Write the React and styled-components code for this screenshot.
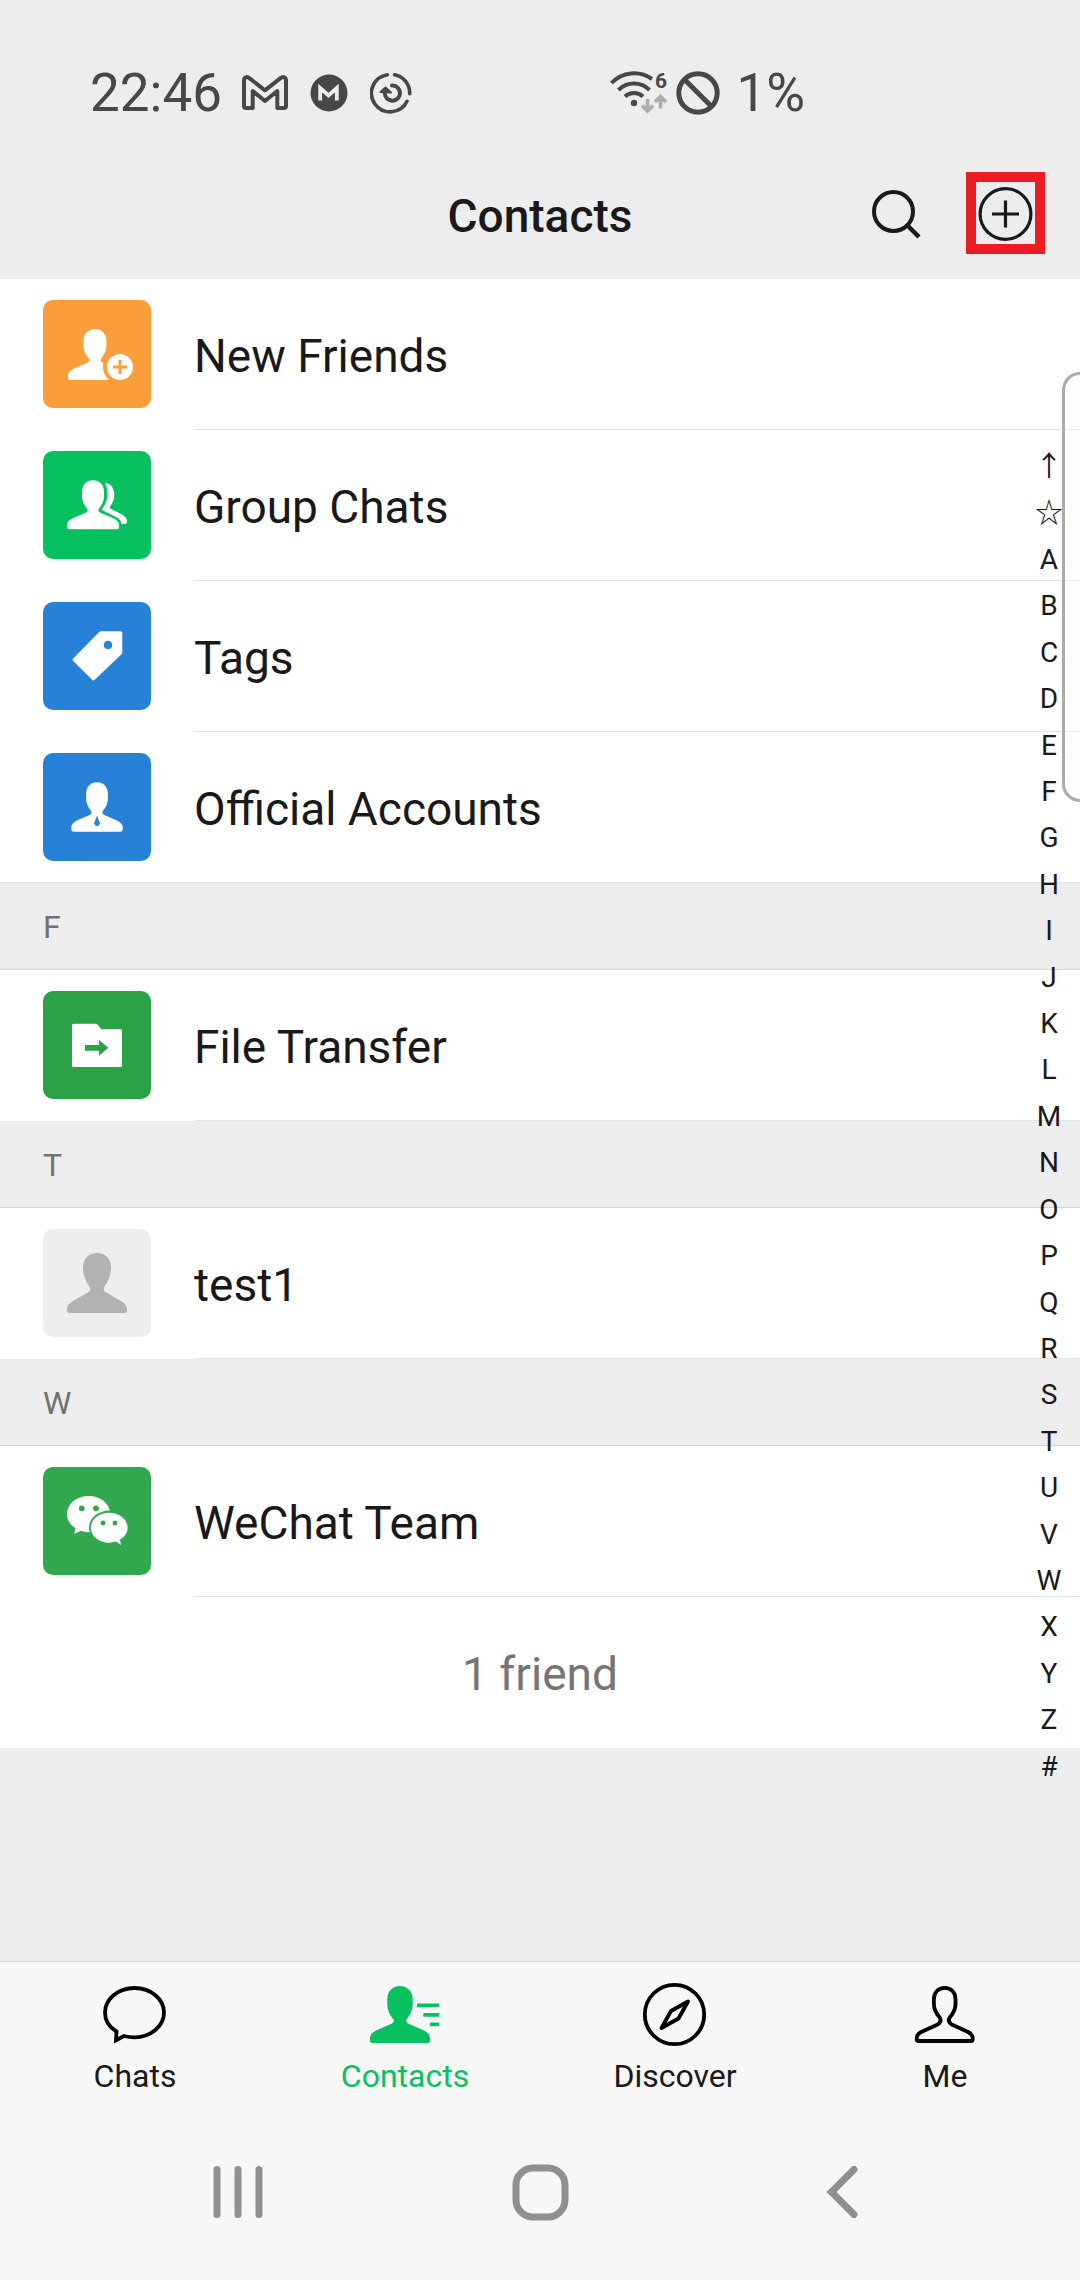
import React from 'react';
import styled, { createGlobalStyle } from 'styled-components';

const GlobalStyle = createGlobalStyle`
  *, *::before, *::after { box-sizing: border-box; }
  body {
    margin: 0;
    background: #ededed;
    color: #191919;
    font-family: Roboto, "Noto Sans", "Noto Sans CJK SC", sans-serif;
  }
  button {
    padding: 0;
    border: 0;
    background: none;
    color: inherit;
    font: inherit;
    cursor: pointer;
  }
  a { color: inherit; text-decoration: none; }
  ul { margin: 0; padding: 0; list-style: none; }
  svg { display: block; flex: none; }
`;

const Screen = styled.div`
  display: flex;
  flex-direction: column;
  min-height: 100vh;
`;

const StatusBar = styled.div`
  display: flex;
  align-items: center;
  justify-content: space-between;
  height: 151px;
  padding: 34px 275px 0 90px;
  color: #474747;
  font-size: 53px;
`;

const StatusGroup = styled.div`
  display: flex;
  align-items: center;
  gap: ${(p) => p.$gap}px;
`;

const TitleBar = styled.header`
  display: grid;
  grid-template-columns: 1fr auto 1fr;
  align-items: center;
  height: 128px;
  padding: 0 35px 4px;
`;

const Title = styled.h1`
  grid-column: 2;
  margin: 0;
  padding-top: 6px;
  font-size: 46px;
  font-weight: 500;
`;

const Actions = styled.div`
  display: flex;
  align-items: center;
  justify-content: flex-end;
  gap: 42px;
`;

const AddButton = styled.button`
  display: grid;
  place-items: center;
  width: 79px;
  height: 82px;
  border: 10px solid #ec1c24;
`;

const Main = styled.main`
  position: relative;
  flex: 1;
`;

const List = styled.ul`
  background: #fff;
`;

const Row = styled.a`
  display: flex;
  align-items: stretch;
  padding-left: 43px;
  border-bottom: ${(p) => (p.$fullLine ? '1px solid #e3e3e3' : '0')};
`;

const Avatar = styled.span`
  display: block;
  flex: none;
  width: 108px;
  height: 108px;
  margin: 21px 43px ${(p) => (p.$fullLine ? 21 : 22)}px 0;
  border-radius: 10px;
  background: ${(p) => p.$color};
  color: #fff;
`;

const Name = styled.span`
  display: flex;
  flex: 1;
  align-items: center;
  padding-top: 4px;
  font-size: 46px;
  border-bottom: ${(p) => (p.$fullLine ? '0' : '1px solid #e3e3e3')};
`;

const SectionTitle = styled.h2`
  display: flex;
  align-items: center;
  height: 87px;
  margin: 0;
  padding: 2px 0 0 43px;
  border-bottom: 1px solid #d5d5d5;
  background: #ededed;
  color: #717171;
  font-size: 32px;
  font-weight: 400;
`;

const Count = styled.p`
  display: flex;
  align-items: center;
  justify-content: center;
  height: 151px;
  margin: 0;
  padding-top: 2px;
  background: #fff;
  color: #757575;
  font-size: 46px;
`;

const IndexStrip = styled.nav`
  position: absolute;
  top: 165px;
  right: 0;
  display: flex;
  flex-direction: column;
  width: 62px;
  height: 1346px;
`;

const IndexLink = styled.a`
  display: flex;
  flex: 1;
  align-items: center;
  justify-content: center;
  font-size: 28px;
  line-height: 32px;
`;

const EdgeHandle = styled.div`
  position: absolute;
  top: 93px;
  right: 0;
  width: 18px;
  height: 430px;
  border: 3px solid #ababab;
  border-right: 0;
  border-radius: 18px 0 0 18px;
  background: rgba(252, 252, 252, 0.4);
`;

const Footer = styled.footer`
  border-top: 1px solid #d2d2d2;
  background: #f7f7f7;
`;

const Tabs = styled.nav`
  display: grid;
  grid-template-columns: repeat(4, 1fr);
  height: 142px;
  padding-top: 17px;
`;

const Tab = styled.a`
  display: flex;
  flex-direction: column;
  align-items: center;
  gap: 6px;
  color: ${(p) => (p.$active ? '#07c160' : '#191919')};
  font-size: 32px;
  line-height: 38px;
`;

const SystemNav = styled.div`
  display: grid;
  grid-template-columns: repeat(3, 1fr);
  height: 176px;
  padding: 0 87px;
  color: #909090;
`;

const SystemButton = styled.button`
  display: grid;
  place-items: center;
`;

const PERSON =
  'M30 0C22.5 0 17.3 5.5 17.3 13V18C17.3 26 21 30 23.5 33.5Q24.5 36 22 37.5L6 44.5Q0 47.5 0 52V54.5Q0 57 2.5 57H57.5Q60 57 60 54.5V52Q60 47.5 54 44.5L38 37.5Q35.5 36 36.5 33.5C39 30 42.7 26 42.7 18V13C42.7 5.5 37.5 0 30 0Z';

function AvatarArt({ children }) {
  return (
    <svg width="108" height="108" viewBox="0 0 108 108" fill="currentColor" aria-hidden="true">
      {children}
    </svg>
  );
}

const art = {
  newFriends: (
    <AvatarArt>
      <path d={PERSON} transform="translate(25 29) scale(.9 .895)" />
      <circle cx="77" cy="67" r="17" fill="#fa9d3b" />
      <path d="M66 80H88V90H66Z" fill="#fa9d3b" />
      <circle cx="77" cy="67" r="13" />
      <path d="M70 67H84M77 60V74" stroke="#fa9d3b" strokeWidth="2.8" />
    </AvatarArt>
  ),
  groups: (
    <AvatarArt>
      <path d={PERSON} transform="translate(24 29.3) scale(.867 .86)" />
      <path d="M62 32.3C68 32 71.3 38 71.3 43C71.3 49 69.5 52 67 55.5Q66.5 57 68 58L79 63.5Q84 66 84 70.5Q84 73 81.5 73H78.3Q78.3 69 74 66.5L58.5 58.8C62 54 64.5 50 64.5 43C64.5 38 63.5 35 62 32.3Z" />
    </AvatarArt>
  ),
  tags: (
    <AvatarArt>
      <path
        d="M57.5 30.8H77.8V51L50.4 77L31 57.7Z"
        stroke="currentColor"
        strokeWidth="3"
        strokeLinejoin="round"
      />
      <circle cx="65" cy="43" r="4.3" fill="#2782d7" />
    </AvatarArt>
  ),
  official: (
    <AvatarArt>
      <path d={PERSON} transform="translate(28.3 29.3) scale(.857 .866)" />
      <path d="M54 62.5L57 70.5Q56 73 54 73Q52 73 51 70.5Z" fill="#2782d7" />
    </AvatarArt>
  ),
  file: (
    <AvatarArt>
      <path d="M30.5 32.7H53Q54 32.7 54.6 33.5L58.3 38.3H77.5Q79 38.3 79 40V74.5Q79 76 77.5 76H30.5Q29 76 29 74.5V34.2Q29 32.7 30.5 32.7Z" />
      <path d="M42 54H56V49L65.3 56.8L56 64.7V59.7H42Z" fill="#2ba245" />
    </AvatarArt>
  ),
  blank: (
    <AvatarArt>
      <path
        fill="#b2b2b2"
        d="M54 24C45.5 24 40 30 40 38C40 48 44 54 47 58.5Q48 61.5 45.5 63L31 71.5Q24 75.5 24 80V81.5Q24 84 26.5 84H81.5Q84 84 84 81.5V80Q84 75.5 77 71.5L62.5 63Q60 61.5 61 58.5C64 54 68 48 68 38C68 30 62.5 24 54 24Z"
      />
    </AvatarArt>
  ),
  wechat: (
    <AvatarArt>
      <path d="M45.7 29C33.7 29 24 37 24 47.3C24 53 27 57.8 32.6 61.2L31.2 67L38 63.8Q42 65.3 47 65.3C58 65 67.4 57 67.4 47.3C67.4 37 57.7 29 45.7 29Z" />
      <ellipse cx="66.2" cy="60.6" rx="20.2" ry="17" fill="#32a84e" />
      <path d="M66.2 45.7C56 45.7 47.8 52.3 47.8 60.7C47.8 69 56 75.7 66.2 75.7Q69.5 75.7 73 74.6L78 78L77 72.6C82 69.5 84.6 65.5 84.6 60.7C84.6 52.3 76.3 45.7 66.2 45.7Z" />
      <g fill="#32a84e">
        <circle cx="38.8" cy="41.3" r="2.9" />
        <circle cx="53" cy="41.3" r="2.9" />
        <circle cx="60" cy="56" r="2.4" />
        <circle cx="72" cy="56" r="2.4" />
      </g>
    </AvatarArt>
  ),
};

const shortcuts = [
  { name: 'New Friends', color: '#fa9d3b', icon: art.newFriends },
  { name: 'Group Chats', color: '#07c160', icon: art.groups },
  { name: 'Tags', color: '#2782d7', icon: art.tags },
  { name: 'Official Accounts', color: '#2782d7', icon: art.official, fullLine: true },
];

const sections = [
  { letter: 'F', contacts: [{ name: 'File Transfer', color: '#2ba245', icon: art.file }] },
  { letter: 'T', contacts: [{ name: 'test1', color: '#eeeeee', icon: art.blank }] },
  { letter: 'W', contacts: [{ name: 'WeChat Team', color: '#32a84e', icon: art.wechat }] },
];

const indexKeys = ['↑', '☆', ...'ABCDEFGHIJKLMNOPQRSTUVWXYZ', '#'];

function TabArt({ children }) {
  return (
    <svg width="72" height="72" viewBox="0 0 72 72" fill="none" strokeWidth="3.8" strokeLinejoin="round" aria-hidden="true">
      {children}
    </svg>
  );
}

const tabs = [
  {
    name: 'Chats',
    icon: (
      <TabArt>
        <path
          stroke="#000"
          strokeLinejoin="miter"
          d="M17.5 52.5C10 48 6 41 6 33.5C6 20 19 9 35.5 9S65 20 65 33.5S52 58.3 35.5 58.3Q29.5 58.3 25 57L17 61.2Z"
        />
      </TabArt>
    ),
  },
  {
    name: 'Contacts',
    active: true,
    icon: (
      <TabArt>
        <path d={PERSON} transform="translate(1 7)" fill="#07c160" />
        <path d="M48 26.3H70.3M54.3 35.8H70.3M61 45.3H70.3" stroke="#07c160" />
      </TabArt>
    ),
  },
  {
    name: 'Discover',
    icon: (
      <TabArt>
        <g stroke="#000">
          <circle cx="35.5" cy="35.5" r="29.7" />
          <path d="M49 22.5L39.5 39.5L22.5 49L32 32Z" />
        </g>
      </TabArt>
    ),
  },
  {
    name: 'Me',
    icon: (
      <TabArt>
        <path
          transform="translate(5.7 7)"
          stroke="#000"
          d="M30 1.9C23.5 1.9 19.2 6.5 19.2 13V18C19.2 25 22.5 28.5 25 31.5Q27.5 35.5 23 38.5L6.5 46Q2 48.5 2 52V53Q2 55 4 55H56Q58 55 58 53V52Q58 48.5 53.5 46L37 38.5Q32.5 35.5 35 31.5C37.5 28.5 40.8 25 40.8 18V13C40.8 6.5 36.5 1.9 30 1.9Z"
        />
      </TabArt>
    ),
  },
];

function ContactRow({ name, color, icon, fullLine }) {
  return (
    <li>
      <Row href="#contact" $fullLine={fullLine}>
        <Avatar $color={color} $fullLine={fullLine}>{icon}</Avatar>
        <Name $fullLine={fullLine}>{name}</Name>
      </Row>
    </li>
  );
}

function Status() {
  return (
    <StatusBar>
      <StatusGroup $gap={20}>
        <span>22:46</span>
        <StatusGroup $gap={22}>
          <svg width="46" height="36" viewBox="0 0 46 36" fill="none" stroke="currentColor" strokeWidth="4" strokeLinejoin="round">
            <path d="M2 5.5C2 2 5 1.2 7.5 3.2L23 15.3L38.5 3.2C41 1.2 44 2 44 5.5V31Q44 33 42 33H35.3V16L23 26L10.7 16V33H4Q2 33 2 31Z" />
          </svg>
          <svg width="38" height="38" viewBox="0 0 38 38" fill="none">
            <circle cx="19" cy="19" r="18.5" fill="currentColor" />
            <path d="M10.2 26.5V14L18.5 21.5L26.8 14V26.5" stroke="#ededed" strokeWidth="3.8" />
          </svg>
          <svg width="42" height="42" viewBox="0 0 42 42" fill="none" stroke="currentColor" strokeWidth="3.6" strokeLinecap="round">
            <path d="M24.6 2.7A18.7 18.7 0 0 1 39.7 21.7M37 29.3A18.7 18.7 0 1 1 17.4 2.7" />
            <path d="M22 13.5A7.6 7.6 0 1 1 14.8 21.5" strokeWidth="4" />
            <path d="M10.5 20L15.5 15.5L21 20.5Z" fill="currentColor" strokeWidth="2" strokeLinejoin="round" />
          </svg>
        </StatusGroup>
      </StatusGroup>
      <StatusGroup $gap={16}>
        <StatusGroup $gap={8}>
          <svg width="58" height="56" viewBox="0 -6 58 56" fill="none" stroke="currentColor" strokeWidth="4">
            <path d="M1.5 12A31 31 0 0 1 42 8M8.5 19A22 22 0 0 1 39.5 19M15 25.5A13 13 0 0 1 33 25.5" />
            <circle cx="24" cy="32" r="3.2" fill="currentColor" stroke="none" />
            <g stroke="#ababab" strokeWidth="3.6">
              <path d="M37.5 28V40M32 34.5L37.5 40L43 34.5M50.5 37.5V25.5M45 31L50.5 25.5L56 31" />
            </g>
            <text x="45" y="17" fill="currentColor" stroke="none" fontSize="21" fontWeight="700">6</text>
          </svg>
          <svg width="44" height="44" viewBox="0 0 44 44" fill="none" stroke="currentColor" strokeWidth="5">
            <circle cx="22" cy="22" r="19.2" />
            <path d="M8.5 8.5L35.5 35.5" />
          </svg>
        </StatusGroup>
        <span>1%</span>
      </StatusGroup>
    </StatusBar>
  );
}

export default function App() {
  return (
    <Screen>
      <GlobalStyle />
      <Status />
      <TitleBar>
        <Title>Contacts</Title>
        <Actions>
          <button aria-label="Search">
            <svg width="58" height="58" viewBox="0 0 58 58" fill="none" stroke="#191919" strokeWidth="4">
              <circle cx="27.5" cy="27.5" r="19.5" />
              <path d="M41.5 41.5L53 53" strokeWidth="4.4" />
            </svg>
          </button>
          <AddButton aria-label="Add contact">
            <svg width="56" height="56" viewBox="0 0 56 56" fill="none" stroke="#191919" strokeWidth="3.2">
              <circle cx="27.5" cy="29" r="25.4" />
              <path d="M14 29H41M27.5 15.5V42.5" />
            </svg>
          </AddButton>
        </Actions>
      </TitleBar>
      <Main>
        <List>
          {shortcuts.map((s) => (
            <ContactRow key={s.name} {...s} />
          ))}
        </List>
        {sections.map((section) => (
          <section key={section.letter}>
            <SectionTitle>{section.letter}</SectionTitle>
            <List>
              {section.contacts.map((c) => (
                <ContactRow key={c.name} {...c} />
              ))}
            </List>
          </section>
        ))}
        <Count>1 friend</Count>
        <EdgeHandle />
        <IndexStrip aria-label="Alphabet index">
          {indexKeys.map((k) => (
            <IndexLink key={k} href="#contact">{k}</IndexLink>
          ))}
        </IndexStrip>
      </Main>
      <Footer>
        <Tabs aria-label="Main">
          {tabs.map((t) => (
            <Tab key={t.name} href="#tab" $active={t.active}>
              {t.icon}
              {t.name}
            </Tab>
          ))}
        </Tabs>
        <SystemNav>
          <SystemButton aria-label="Recent apps">
            <svg width="50" height="54" viewBox="0 0 50 54" fill="none" stroke="currentColor" strokeWidth="7" strokeLinecap="round">
              <path d="M4 4.5V49.5M25 4.5V49.5M46 4.5V49.5" />
            </svg>
          </SystemButton>
          <SystemButton aria-label="Home">
            <svg width="57" height="57" viewBox="0 0 57 57" fill="none" stroke="currentColor" strokeWidth="7">
              <rect x="4" y="4" width="49" height="49" rx="17" />
            </svg>
          </SystemButton>
          <SystemButton aria-label="Back">
            <svg width="32" height="54" viewBox="0 0 32 54" fill="none" stroke="currentColor" strokeWidth="7" strokeLinecap="round">
              <path d="M28 4.5L5.5 27L28 49.5" />
            </svg>
          </SystemButton>
        </SystemNav>
      </Footer>
    </Screen>
  );
}
